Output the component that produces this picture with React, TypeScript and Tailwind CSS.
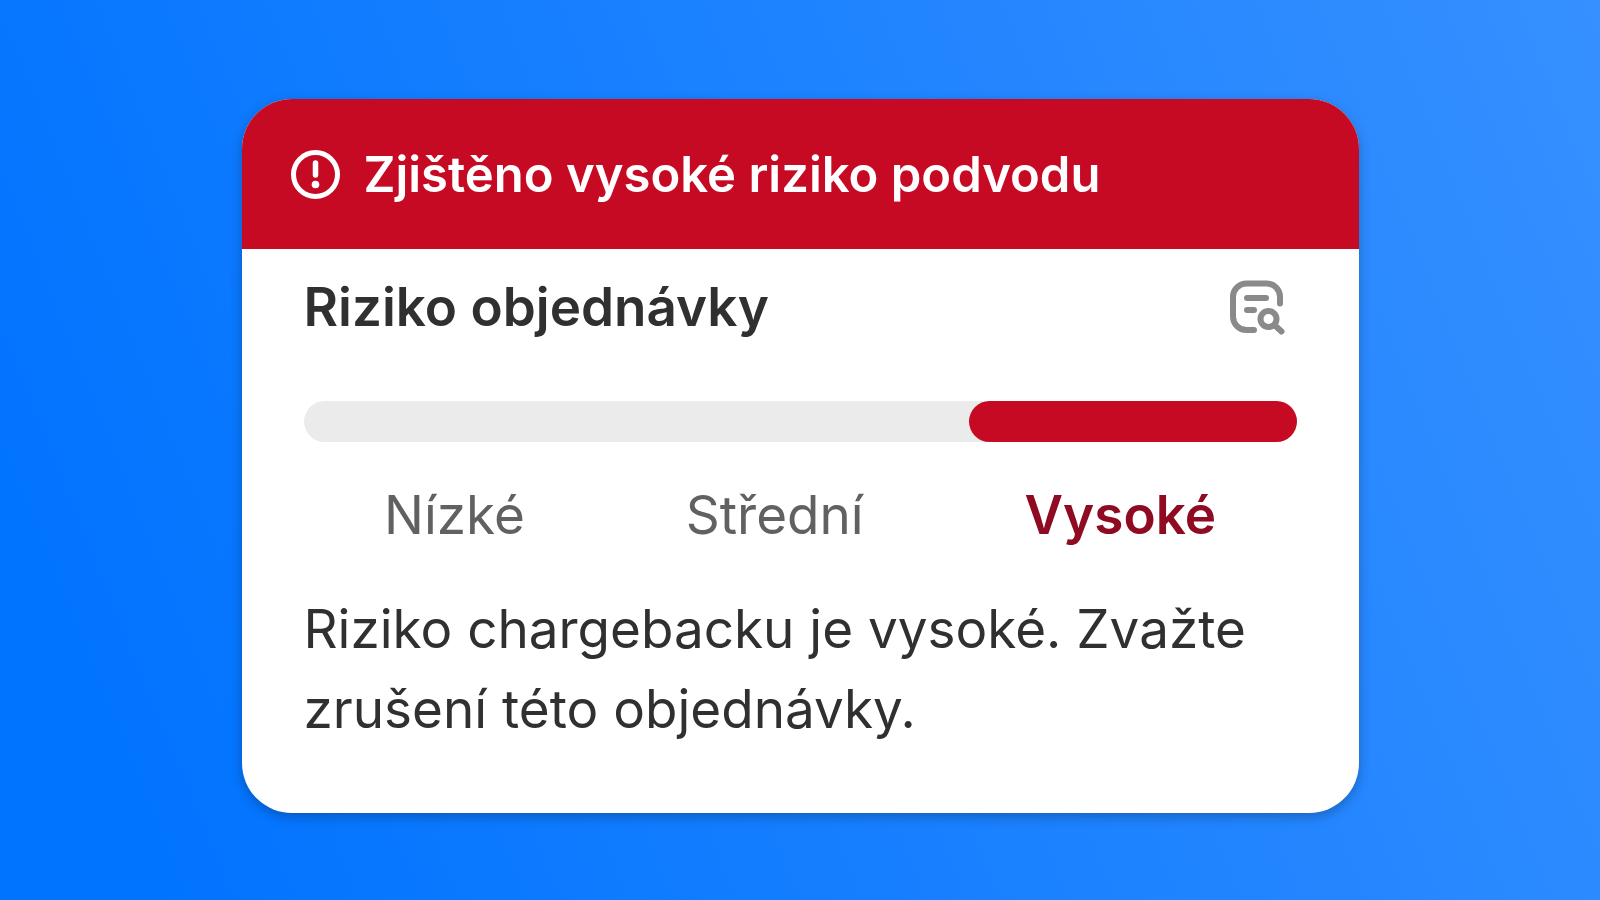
import React from "react";

const levels = [
  { label: "Nízké", active: false },
  { label: "Střední", active: false },
  { label: "Vysoké", active: true },
];

function AlertIcon() {
  return (
    <svg className="size-[50px] shrink-0" viewBox="0 0 50 50" fill="none" stroke="currentColor" strokeWidth="5" strokeLinecap="round" aria-hidden="true">
      <circle cx="25.5" cy="24.5" r="22" />
      <path d="M25.5 13v12" strokeWidth="5.5" />
      <circle cx="25.5" cy="34.5" r="3.8" fill="currentColor" stroke="none" />
    </svg>
  );
}

function OrderSearchIcon() {
  return (
    <svg className="size-14" viewBox="0 0 56 56" fill="none" stroke="currentColor" strokeWidth="6" strokeLinecap="round" strokeLinejoin="round" aria-hidden="true">
      <path d="M25 51H17.5A13.5 13.5 0 0 1 4 37.5V18A13.5 13.5 0 0 1 17.5 4.5H37.5A13.5 13.5 0 0 1 51 18V24.5" />
      <path d="M18 19H37M18 31H25" />
      <circle cx="39.5" cy="40" r="8" />
      <path d="M46 46.5L52.5 52.5" />
    </svg>
  );
}

export default function App() {
  return (
    <main className="flex min-h-screen items-start justify-center bg-linear-[68deg] from-[#0073ff] from-7% to-[#3690ff] px-6 pt-[99px] pb-[86px] font-[Inter,sans-serif] text-[#303030]">
      <section className="w-full max-w-[1117px] overflow-hidden rounded-[50px] bg-white shadow-[0_4px_12px_rgba(0,0,0,0.25)]">
        <header className="flex items-center gap-6 bg-[#c70a24] px-12 pt-[46px] pb-11 text-white">
          <AlertIcon />
          <h1 className="text-[49px] leading-[60px] font-semibold">Zjištěno vysoké riziko podvodu</h1>
        </header>
        <div className="px-[62px] pt-[26px] pb-16">
          <div className="flex items-center justify-between pr-3">
            <h2 className="text-[53px] leading-[64px] font-semibold">Riziko objednávky</h2>
            <button type="button" aria-label="Zobrazit analýzu" className="text-[#8a8a8a]">
              <OrderSearchIcon />
            </button>
          </div>
          <div className="mt-[62px] flex h-[41px] justify-end rounded-full bg-[#ebebeb]">
            <div className="w-[33%] rounded-full bg-[#c70a24]" />
          </div>
          <ul className="mt-[39px] flex justify-around text-[53px] leading-[68px] text-[#616161]">
            {levels.map((level) => (
              <li key={level.label} className={level.active ? "font-semibold text-[#8e0b21]" : ""}>
                {level.label}
              </li>
            ))}
          </ul>
          <p className="mt-10 text-[53px] leading-[80px]">Riziko chargebacku je vysoké. Zvažte zrušení této objednávky.</p>
        </div>
      </section>
    </main>
  );
}
